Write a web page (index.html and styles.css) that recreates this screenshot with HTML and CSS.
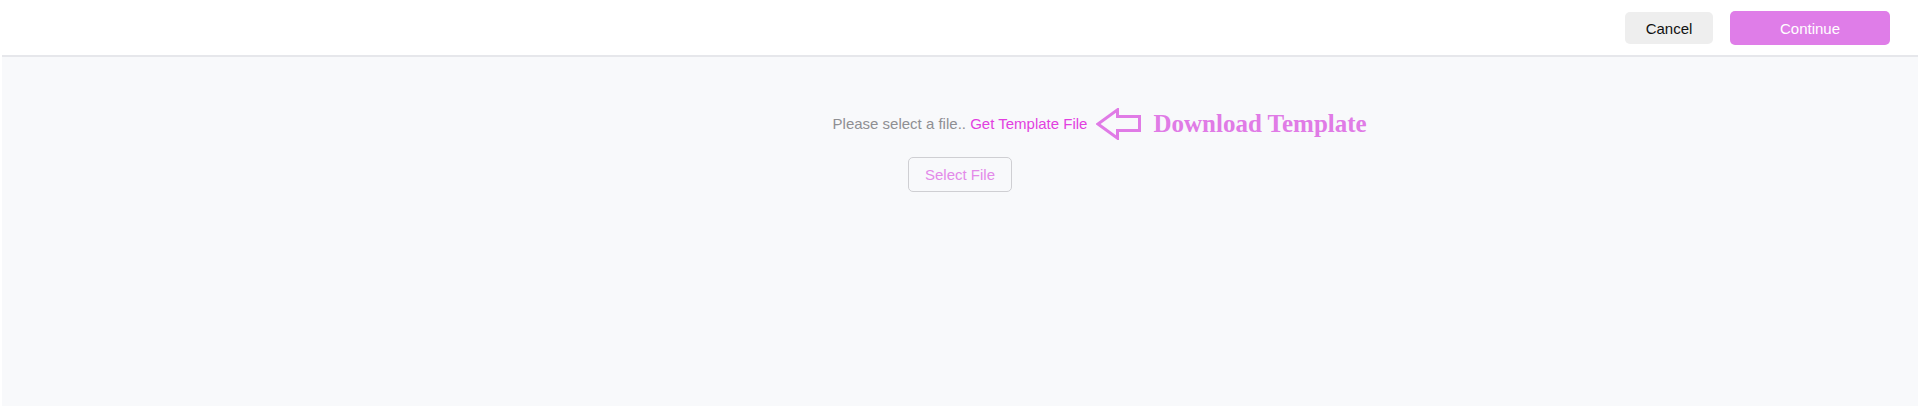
FILE: index.html
```html
<!DOCTYPE html>
<html lang="en">
<head>
<meta charset="utf-8">
<title>Import</title>
<link rel="stylesheet" href="styles.css">
</head>
<body>
  <header class="topbar">
    <button class="btn btn-cancel">Cancel</button>
    <button class="btn btn-continue">Continue</button>
  </header>
  <main class="content">
    <div class="prompt">
      <span class="hint">Please select a file..</span>
      <span class="link-wrap">
        <a class="template-link" href="#">Get Template File</a>
        <span class="annotation">
          <svg class="arrow" width="46" height="32" viewBox="0 0 46 32">
            <path d="M2 16 L21.5 1.8 L21.5 8.5 L43.5 8.5 L43.5 22.5 L21.5 22.5 L21.5 30.2 Z" fill="none" stroke="#e07be6" stroke-width="3" stroke-linejoin="miter"/>
          </svg>
          <span class="annotation-text">Download Template</span>
        </span>
      </span>
    </div>
    <button class="btn-select">Select File</button>
  </main>
</body>
</html>
```

FILE: styles.css
```css
* {
  box-sizing: border-box;
}

html, body {
  margin: 0;
  padding: 0;
  height: 100%;
}

body {
  background: #ffffff;
  font-family: "Liberation Sans", Arial, sans-serif;
  display: flex;
  flex-direction: column;
}

.topbar {
  height: 57px;
  display: flex;
  justify-content: flex-end;
  align-items: flex-start;
  gap: 17px;
  padding: 11px 28px 0 0;
  border-bottom: 2px solid #e6e7eb;
  margin: 0 2px;
}

.btn {
  font-family: "Liberation Sans", Arial, sans-serif;
  font-size: 15px;
  border: none;
  border-radius: 5px;
  padding: 0;
  cursor: pointer;
}

.btn-cancel {
  width: 88px;
  height: 32px;
  margin-top: 1px;
  background: #eeeeee;
  color: #111111;
}

.btn-continue {
  width: 160px;
  height: 34px;
  background: #df7de8;
  color: #ffffff;
}

.content {
  flex: 1;
  margin: 0 2px;
  background: #f8f9fb;
  display: flex;
  flex-direction: column;
  align-items: center;
  padding-top: 57px;
}

.prompt {
  font-size: 15px;
  line-height: 20px;
  white-space: nowrap;
}

.hint {
  color: #8f8f93;
}

.link-wrap {
  position: relative;
}

.template-link {
  color: #e23fe0;
  text-decoration: none;
}

.annotation {
  position: absolute;
  left: 100%;
  top: -7px;
  margin-left: 9px;
  display: flex;
  align-items: center;
  gap: 11px;
  white-space: nowrap;
}

.arrow {
  display: block;
}

.annotation-text {
  font-family: "Liberation Serif", "Times New Roman", serif;
  font-weight: bold;
  font-size: 25px;
  color: #e07be6;
  line-height: 32px;
}

.btn-select {
  margin-top: 23px;
  width: 104px;
  height: 35px;
  background: transparent;
  border: 1px solid #cfcfd3;
  border-radius: 5px;
  font-family: "Liberation Sans", Arial, sans-serif;
  font-size: 15px;
  color: #e38ae9;
  padding: 0;
}
```
